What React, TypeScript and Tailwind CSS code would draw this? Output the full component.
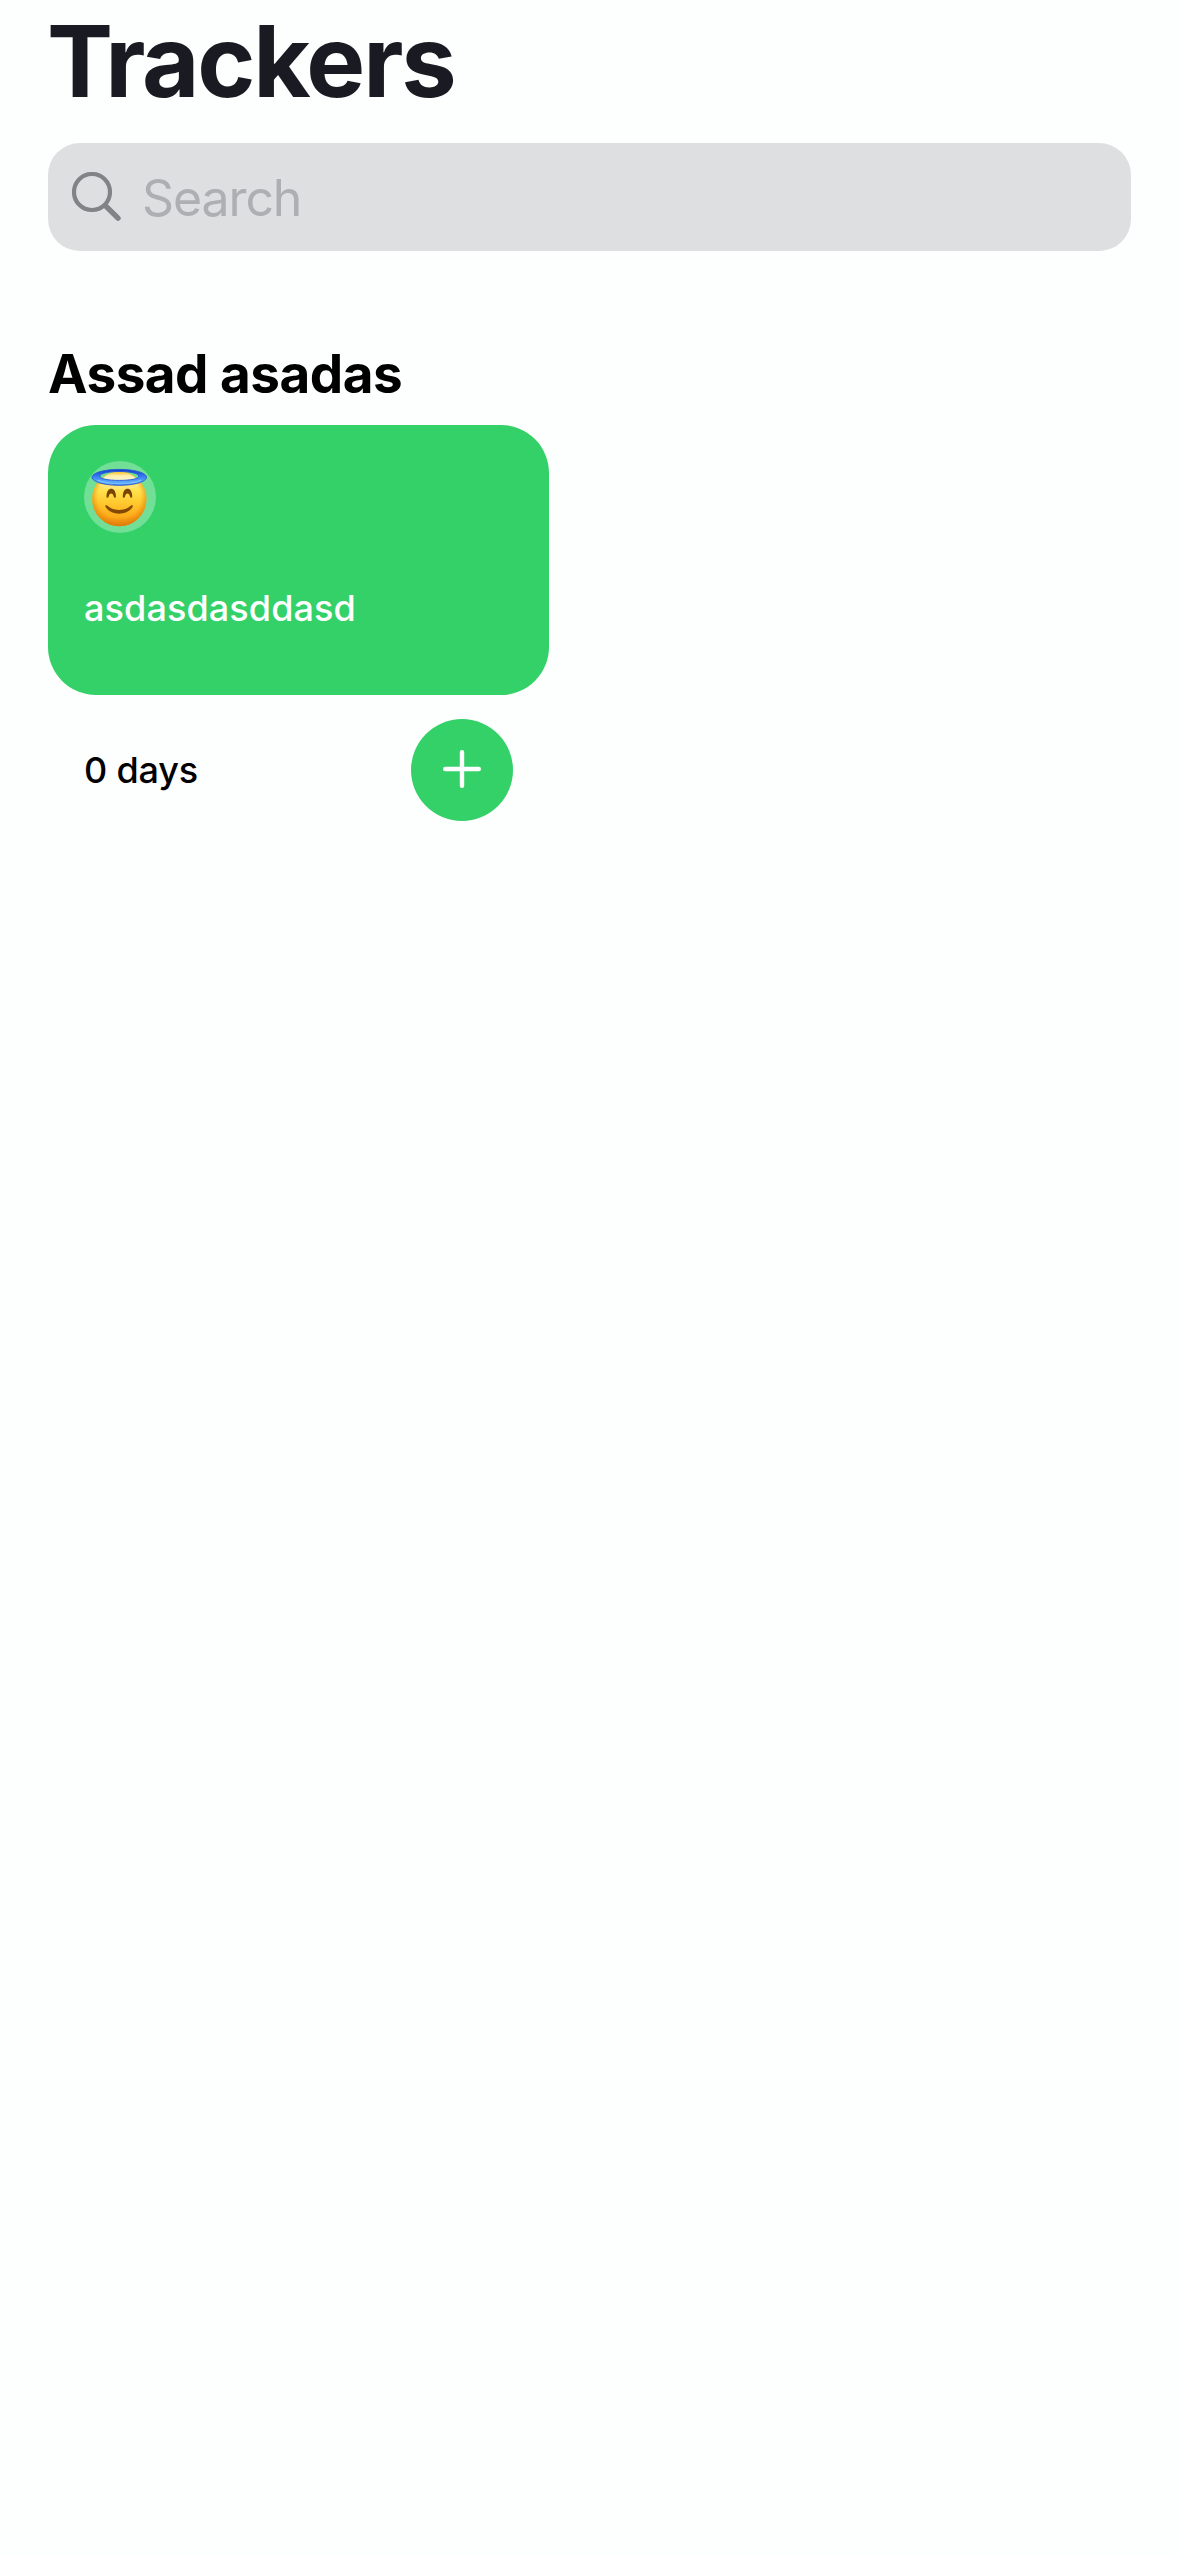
function SearchIcon() {
  return (
    <svg className="h-[50px] w-[50px] shrink-0" viewBox="0 0 50 50" fill="none" stroke="#838287" strokeLinecap="round">
      <circle cx="20" cy="20" r="18" strokeWidth="4.2" />
      <path d="M33.6 33.8 46 46.200" strokeWidth="5.400" />
    </svg>
  );
}

function HaloFace() {
  return (
    <svg className="h-[60px] w-[60px]" viewBox="0 0 60 60" fill="none" role="img" aria-label="Smiling face with halo">
      <defs>
        <linearGradient id="face" x1="0" y1="0" x2="0" y2="1">
          <stop offset="0" stopColor="#ffd23a" />
          <stop offset="0.3" stopColor="#ffe653" />
          <stop offset="0.55" stopColor="#ffcb30" />
          <stop offset="0.82" stopColor="#fdac1c" />
          <stop offset="1" stopColor="#e68510" />
        </linearGradient>
        <radialGradient id="edge" cx="0.5" cy="0.46" r="0.54">
          <stop offset="0.72" stopColor="#e98508" stopOpacity="0" />
          <stop offset="1" stopColor="#dd7605" stopOpacity="0.75" />
        </radialGradient>
        <linearGradient id="glow" x1="0" y1="0" x2="0" y2="1">
          <stop offset="0" stopColor="#ffc020" />
          <stop offset="0.4" stopColor="#fff0b0" />
          <stop offset="1" stopColor="#f4f5d8" />
        </linearGradient>
        <linearGradient id="halo" x1="0" y1="0" x2="0" y2="1">
          <stop offset="0" stopColor="#1536cc" />
          <stop offset="0.4" stopColor="#3476ee" />
          <stop offset="0.8" stopColor="#5cacff" />
          <stop offset="1" stopColor="#3a80ee" />
        </linearGradient>
      </defs>
      <circle cx="29.3" cy="32" r="27.200" fill="url(#face)" />
      <circle cx="29.3" cy="32" r="27.200" fill="url(#edge)" />
      <path d="M7 17.500h44.600c-2 3-13 5-22.300 5S9 20.500 7 17.500Z" fill="#ffe89a" fillOpacity="0.5" />
      <path d="M12 12.200c4.500-4.700 10.300-7.600 17.300-7.600s12.800 2.900 17.300 7.600c-3.300 2.200-10 3.200-17.300 3.200s-14-1-17.300-3.200Z" fill="url(#glow)" />
      <path
        d="M29.3 2.400c15.200 0 27.200 3.500 27.200 7.900s-12 8-27.200 8-27.200-3.600-27.200-8 12-7.900 27.200-7.900Zm0 2.100c-11 0-19.500 2-19.500 4.700s8.500 4.200 19.500 4.200 19.500-1.500 19.500-4.200-8.500-4.700-19.500-4.700Z"
        fill="url(#halo)"
        fillRule="evenodd"
        stroke="#2152d6"
        strokeWidth="0.9"
      />
      <path d="M8 13.400c5 2.400 12 3.200 21.300 3.200s16.300-.8 21.300-3.200" stroke="#76bdff" strokeWidth="1.300" strokeLinecap="round" />
      <path
        d="M17.200 30.700c-.7-.2-.8-1.200-.7-2.300.3-4 2-6.700 4.700-6.700s4.400 2.700 4.700 6.700c.1 1.100 0 2.100-.7 2.300-.8.200-1.300-.6-1.700-1.800-.5-1.600-1.200-2.300-2.300-2.300s-1.800.7-2.300 2.300c-.4 1.200-.9 2-1.700 1.800ZM33.500 30.700c-.7-.2-.8-1.200-.7-2.300.3-4 2-6.700 4.700-6.700s4.400 2.700 4.700 6.700c.1 1.100 0 2.100-.7 2.300-.8.200-1.300-.6-1.700-1.800-.5-1.600-1.200-2.300-2.300-2.300s-1.800.7-2.300 2.300c-.4 1.200-.9 2-1.700 1.800Z"
        fill="#7a4403"
      />
      <path d="M15.500 39.700c-.7-1.100.6-2.100 1.600-1.200 3.400 3 7.600 4.500 12 4.500s8.600-1.500 12-4.500c1-.9 2.300.1 1.600 1.200-2.500 4.300-7.600 7-13.600 7s-11.100-2.700-13.600-7Z" fill="#824804" />
    </svg>
  );
}

function PlusIcon() {
  return (
    <svg className="h-[38px] w-[38px]" viewBox="0 0 38 38" fill="none" stroke="#fff" strokeWidth="4.400" strokeLinecap="round">
      <path d="M19 2.200v33.600M2.200 19h33.600" />
    </svg>
  );
}

function TrackerCard({ name, days }: { name: string; days: string }) {
  return (
    <article className="w-[501px]">
      <div className="flex h-[270px] flex-col items-start rounded-[48px] bg-[#34d169] px-9 pt-9">
        <div className="flex size-[72px] items-center justify-center rounded-full bg-white/30">
          <HaloFace />
        </div>
        <p className="mt-[53px] text-[36px] leading-[44px] font-medium tracking-[0.1px] text-white">{name}</p>
      </div>
      <div className="mt-6 flex items-center justify-between px-9">
        <span className="text-[36px] leading-[44px] font-medium tracking-[-0.2px] text-black">{days}</span>
        <button aria-label="Mark as done" className="flex size-[102px] items-center justify-center rounded-full bg-[#34d169] pb-[2px]">
          <PlusIcon />
        </button>
      </div>
    </article>
  );
}

export default function App() {
  return (
    <main className="flex min-h-screen w-full flex-col bg-[#fdfefe] px-12 pt-px font-['Inter',sans-serif]">
      <h1 className="-ml-px text-[99px] leading-[120px] font-bold tracking-[-2.2px] text-[#1a1b22]">Trackers</h1>
      <div className="mt-[22px] flex h-[108px] items-center rounded-[32px] bg-[#dedfe1] pl-6">
        <SearchIcon />
        <span className="mt-px ml-[20px] text-[50px] leading-[60px] tracking-[-1.1px] text-[#aeafb2]">Search</span>
      </div>
      <section className="mt-[91px]">
        <h2 className="text-[53px] leading-[64px] font-bold tracking-[-0.5px] text-black">Assad asadas</h2>
        <div className="mt-[19px]">
          <TrackerCard name="asdasdasddasd" days="0 days" />
        </div>
      </section>
    </main>
  );
}
